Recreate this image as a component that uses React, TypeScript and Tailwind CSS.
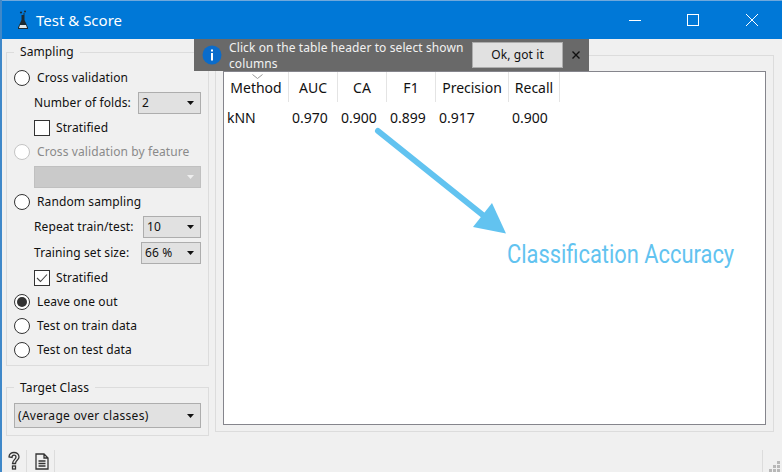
import type { ReactNode } from 'react';

const columns = [
  { name: 'Method', width: 'w-[65px]', value: 'kNN' },
  { name: 'AUC', width: 'w-[49px]', value: '0.970' },
  { name: 'CA', width: 'w-[49px]', value: '0.900' },
  { name: 'F1', width: 'w-[49px]', value: '0.899' },
  { name: 'Precision', width: 'w-[73px]', value: '0.917' },
  { name: 'Recall', width: 'w-[51px]', value: '0.900' },
];

function Radio({ checked, disabled }: { checked?: boolean; disabled?: boolean }) {
  return (
    <span
      className={`flex h-4 w-4 shrink-0 items-center justify-center rounded-full border bg-white ${
        disabled ? 'border-[#c4c4c4]' : 'border-[#333]'
      }`}
    >
      {checked && <span className="h-2.5 w-2.5 rounded-full bg-[#333]" />}
    </span>
  );
}

function RadioRow({ label, checked, disabled, className }: { label: string; checked?: boolean; disabled?: boolean; className?: string }) {
  return (
    <div className={`flex h-6 items-center gap-[7px] ${className ?? ''}`}>
      <Radio checked={checked} disabled={disabled} />
      <span className={disabled ? 'text-[#8a8a8a]' : ''}>{label}</span>
    </div>
  );
}

function Check({ checked }: { checked?: boolean }) {
  return (
    <div className="mt-px flex h-6 items-center gap-[6px] pl-5">
      <span className="flex h-4 w-4 items-center justify-center border border-[#333] bg-white">
        {checked && (
          <svg width="12" height="10" viewBox="0 0 12 10" fill="none" stroke="#444" strokeWidth="1.1">
            <path d="M1 5l3.5 3.5L11 1.5" />
          </svg>
        )}
      </span>
      <span>Stratified</span>
    </div>
  );
}

function Combo({ value, className, disabled }: { value?: string; className: string; disabled?: boolean }) {
  return (
    <div
      className={`flex items-center justify-between border pl-[3px] pr-[6px] ${
        disabled ? 'border-[#c0c0c0] bg-[#cacaca]' : 'border-[#adadad] bg-[#e1e1e1]'
      } ${className}`}
    >
      <span>{value}</span>
      <svg width="7" height="4" viewBox="0 0 7 4">
        <path d="M0 0h7L3.5 4z" fill={disabled ? '#eeeeee' : '#111'} />
      </svg>
    </div>
  );
}

function ComboRow({ label, children, className }: { label: string; children: ReactNode; className?: string }) {
  return (
    <div className={`flex h-6 items-center justify-between pl-5 ${className ?? ''}`}>
      <span>{label}</span>
      {children}
    </div>
  );
}

function Group({ title, className, titleClass, children }: { title: string; className: string; titleClass: string; children: ReactNode }) {
  return (
    <div className={`relative w-[203px] border border-[#dcdcdc] px-[7px] ${className}`}>
      <span className={`absolute left-[7px] bg-[#f0f0f0] px-[6px] leading-4 ${titleClass}`}>{title}</span>
      {children}
    </div>
  );
}

export default function App() {
  return (
    <div
      className="relative flex h-[472px] w-[782px] flex-col overflow-hidden border-l-2 border-[#3f88c9] bg-[#f0f0f0] text-[12px] tracking-[0.1px] text-[#111]"
      style={{ fontFamily: '"Noto Sans", sans-serif' }}
    >
      {/* Title bar */}
      <div className="flex h-[39px] shrink-0 items-center border-t border-[#6fa8dc] bg-[#0078d7] tracking-normal text-white">
        <svg width="14" height="20" viewBox="0 0 14 20" className="ml-[14px]">
          <path d="M5.5 5h3v5l3.5 7.5v1.5H2v-1.5L5.5 10z" fill="#1c2b33" />
          <path d="M4 15h6l1 3H3z" fill="#dfe7ea" />
          <circle cx="5" cy="2.5" r="1.1" fill="#1c2b33" />
          <circle cx="9" cy="1.5" r="1" fill="#1c2b33" />
          <circle cx="8" cy="4" r="0.8" fill="#1c2b33" />
        </svg>
        <span className="ml-[6px] text-[15px]">Test &amp; Score</span>
        <div className="ml-auto flex items-center">
          <svg width="12" height="12" viewBox="0 0 12 12" className="mr-[46px]" stroke="white" fill="none">
            <path d="M0 6.500h12" />
          </svg>
          <svg width="12" height="12" viewBox="0 0 12 12" className="mr-[47px]" stroke="white" fill="none">
            <rect x="0.5" y="0.5" width="11" height="11" />
          </svg>
          <svg width="12" height="12" viewBox="0 0 12 12" className="mr-[24px]" stroke="white" fill="none">
            <path d="M0 0l12 12M12 0L0 12" />
          </svg>
        </div>
      </div>

      {/* Body */}
      <div className="flex pl-1">
        <div className="w-[203px]">
          <Group title="Sampling" titleClass="-top-[9px]" className="mt-[13px] h-[314px] pt-[13px]">
            <RadioRow label="Cross validation" />
            <ComboRow label="Number of folds:" className="mt-px">
              <Combo value="2" className="h-[22px] w-[63px]" />
            </ComboRow>
            <Check />
            <RadioRow label="Cross validation by feature" disabled />
            <div className="mt-px flex h-6 items-center pl-5">
              <Combo className="h-[22px] w-full" disabled />
            </div>
            <RadioRow label="Random sampling" className="mt-px" />
            <ComboRow label="Repeat train/test:" className="mt-px">
              <Combo value="10" className="h-[22px] w-[58px]" />
            </ComboRow>
            <ComboRow label="Training set size:" className="mt-0.5">
              <Combo value="66 %" className="h-[22px] w-[60px]" />
            </ComboRow>
            <Check checked />
            <RadioRow label="Leave one out" checked />
            <RadioRow label="Test on train data" />
            <RadioRow label="Test on test data" />
          </Group>
          <Group title="Target Class" titleClass="-top-[8px]" className="mt-[21px] h-[49px] pt-[15px]">
            <Combo value="(Average over classes)" className="h-[25px] w-full tracking-[0.3px]" />
          </Group>
        </div>

        <div className="ml-[6px] mt-4 h-[377px] w-[559px] border border-[#dcdcdc] px-[7px] pb-[6px] pt-[15px]">
          <div className="relative h-full border border-[#85858c] bg-white text-[14px] tracking-normal">
            <svg width="11" height="5" viewBox="0 0 11 5" className="absolute left-[28px] top-[2px]" fill="none" stroke="#999">
              <path d="M0.5 0.5l5 4 5-4" />
            </svg>
            <div className="flex h-[30px]">
              {columns.map((col) => (
                <div key={col.name} className={`flex items-center justify-center border-r border-[#e4e4e4] ${col.width}`}>
                  {col.name}
                </div>
              ))}
            </div>
            <div className="flex h-[30px]">
              {columns.map((col) => (
                <div key={col.name} className={`flex items-center pl-[3px] ${col.width}`}>
                  {col.value}
                </div>
              ))}
            </div>
          </div>
        </div>
      </div>

      {/* Bottom bar */}
      <div className="mt-auto flex h-[22px] items-center">
        <svg width="14" height="20" viewBox="0 0 14 20" className="ml-[5px]" fill="none" stroke="#333" strokeWidth="1.3">
          <path d="M2 6c0-6 10-6 10 0 0 3-3.500 3-3.500 6.500h-3C5.500 9 9 8.500 9 6c0-2.500-4-2.500-4 .5z" />
          <rect x="5.5" y="15" width="3" height="3" />
        </svg>
        <span className="ml-[5px] h-full w-px bg-[#dcdcdc]" />
        <svg width="14" height="17" viewBox="0 0 14 17" className="ml-2" fill="none" stroke="#333" strokeWidth="1.3">
          <path d="M1 1h8l4 4v11H1zM9 1v4h4M3.500 8h7M3.500 10.500h7M3.500 13h7" />
        </svg>
        <span className="ml-[5px] h-full w-px bg-[#dcdcdc]" />
        <span className="ml-auto h-full w-px bg-[#dcdcdc]" />
        <svg width="19" height="11" viewBox="0 0 19 11" className="mt-[11px]" fill="#b8b8b8">
          <rect x="14" y="0" width="3" height="3" />
          <rect x="10" y="4" width="3" height="3" />
          <rect x="14" y="4" width="3" height="3" />
          <rect x="6" y="8" width="3" height="3" />
          <rect x="10" y="8" width="3" height="3" />
          <rect x="14" y="8" width="3" height="3" />
        </svg>
      </div>

      {/* Info banner over the table */}
      <div className="absolute left-[192px] top-[39px] flex h-8 w-[395px] items-center bg-[#696969] text-[#f2f2f2]">
        <svg width="20" height="20" viewBox="0 0 20 20" className="ml-2 shrink-0">
          <circle cx="10" cy="10" r="9.5" fill="#0a6ccb" />
          <rect x="9" y="8" width="2" height="7.5" fill="white" />
          <rect x="9" y="4.5" width="2" height="2" fill="white" />
        </svg>
        <span className="ml-[7px] w-[240px] pt-px leading-4">Click on the table header to select shown columns</span>
        <button type="button" className="ml-[3px] h-[26px] w-[91px] border border-[#adadad] bg-[#e1e1e1] text-[#111]">
          Ok, got it
        </button>
        <svg width="8" height="8" viewBox="0 0 8 8" className="ml-[9px]" stroke="#111" strokeWidth="1.4">
          <path d="M0.5 0.5l7 7M7.500 0.5l-7 7" />
        </svg>
      </div>

      {/* Annotation */}
      <svg width="782" height="472" viewBox="0 0 782 472" className="pointer-events-none absolute -left-[2px] top-0">
        <path d="M378 131L484 216" stroke="#62c3f0" strokeWidth="6" strokeLinecap="round" />
        <path d="M506 233.500L492 203L473 227z" fill="#62c3f0" />
      </svg>
      <span
        className="absolute left-[505px] top-[239px] origin-left scale-x-[0.875] whitespace-nowrap text-[25px] leading-8 tracking-normal text-[#62c3f0]"
        style={{ fontFamily: 'Roboto, sans-serif' }}
      >
        Classification Accuracy
      </span>
    </div>
  );
}
